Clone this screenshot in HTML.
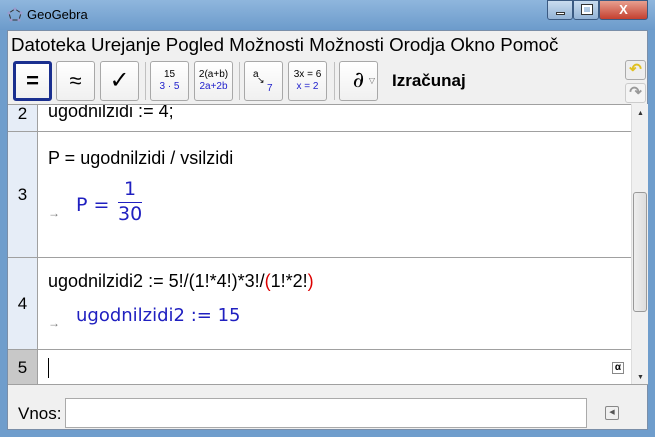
<!DOCTYPE html>
<html><head><meta charset="utf-8"><style>
*{margin:0;padding:0;box-sizing:border-box}
body{width:655px;height:437px;overflow:hidden;font-family:"Liberation Sans",sans-serif;background:#6f9dcc;position:relative}
.title{position:absolute;left:0;top:0;width:655px;height:30px;background:linear-gradient(#8fb6dd,#6c9bcb)}
.title span{position:absolute;left:27px;top:7px;font-size:13px;color:#000}
.wb{position:absolute;top:0;height:20px;border:1px solid #3b5a82;border-radius:0 0 3px 3px}
.inner{position:absolute;left:7px;top:30px;width:641px;height:400px;background:#f0f0f0;border:1px solid #7a8ea8}
.menu{position:absolute;left:3px;top:3px;font-size:18.7px;white-space:nowrap}
.btn{position:absolute;top:30px;width:39px;height:40px;background:linear-gradient(#fff,#f0f0f0);border:1px solid #a8a8a8;border-radius:3px;text-align:center}
.sep{position:absolute;top:31px;width:1px;height:38px;background:#c0c0c0}
.content{position:absolute;left:0;top:73px;width:623px;height:280px;background:#fff;border-top:1px solid #a0a0a0;overflow:hidden}
.num{position:absolute;left:0;width:30px;background:#e6edf7;border-right:1px solid #a0a0a0;border-bottom:1px solid #a0a0a0;font-size:17px;text-align:center}
.row{position:absolute;left:30px;width:593px;border-bottom:1px solid #a0a0a0}
.t{position:absolute;font-size:18px;color:#000;white-space:nowrap}
.b{color:#2020c0;font-family:"DejaVu Sans",sans-serif}
.arr{position:absolute;color:#777;font-size:12px}
</style></head><body>
<div class="title"><span>GeoGebra</span>
<svg style="position:absolute;left:7px;top:7px" width="16" height="16"><polygon points="8,2 14,6 12,13 4,13 2,6" fill="none" stroke="#333" stroke-width="1"/><circle cx="8" cy="2" r="1.5" fill="#99c"/><circle cx="14" cy="6" r="1.5" fill="#99c"/><circle cx="12" cy="13" r="1.5" fill="#99c"/><circle cx="4" cy="13" r="1.5" fill="#99c"/><circle cx="2" cy="6" r="1.5" fill="#99c"/></svg>
<div class="wb" style="left:547px;width:26px;background:linear-gradient(#c9dcef,#93b3d6)"><div style="position:absolute;left:8px;top:11px;width:9px;height:3px;background:#fff;border:1px solid #333"></div></div>
<div class="wb" style="left:573px;width:26px;background:linear-gradient(#c9dcef,#93b3d6)"><div style="position:absolute;left:8px;top:4px;width:10px;height:9px;border:2px solid #fff;outline:1px solid #333"></div></div>
<div class="wb" style="left:599px;width:49px;background:linear-gradient(#e8a090,#c44030);color:#fff;font-weight:bold;font-size:13px;text-align:center;line-height:18px">X</div>
</div>
<div class="inner">
<div class="menu">Datoteka Urejanje Pogled Možnosti Možnosti Orodja Okno Pomoč</div>
<div class="btn" style="left:5px;border:3px solid #1a2f8f;font-size:22px;line-height:34px;font-weight:bold">=</div>
<div class="btn" style="left:48px;font-size:22px;line-height:38px">≈</div>
<div class="btn" style="left:92px;font-size:24px;line-height:38px">✓</div>
<div class="sep" style="left:137px"></div>
<div class="btn" style="left:142px;font-size:10px;line-height:12px;padding-top:7px">15<br><span style="color:#22c">3 · 5</span></div>
<div class="btn" style="left:186px;font-size:10px;line-height:12px;padding-top:7px">2(a+b)<br><span style="color:#22c">2a+2b</span></div>
<div class="sep" style="left:231px"></div>
<div class="btn" style="left:236px;font-size:10px"><span style="position:absolute;left:8px;top:7px">a</span><span style="position:absolute;left:12px;top:13px;font-size:9px">↘</span><span style="position:absolute;left:22px;top:21px;color:#22c">7</span></div>
<div class="btn" style="left:280px;font-size:10px;line-height:12px;padding-top:7px">3x = 6<br><span style="color:#22c">x = 2</span></div>
<div class="sep" style="left:326px"></div>
<div class="btn" style="left:331px;font-size:22px;line-height:38px;font-family:'DejaVu Serif',serif;font-style:italic">∂<span style="position:absolute;right:2px;bottom:0;font-size:8px;color:#666;font-style:normal">▽</span></div>
<div style="position:absolute;left:384px;top:40px;font-size:17px;font-weight:bold">Izračunaj</div>
<div style="position:absolute;left:617px;top:29px;width:21px;height:20px;border:1px solid #aaa;border-radius:3px;background:#eee;color:#e0c020;font-size:15px;text-align:center;line-height:18px;font-weight:bold">↶</div>
<div style="position:absolute;left:617px;top:52px;width:21px;height:20px;border:1px solid #ccc;border-radius:3px;background:#f4f4f4;color:#999;font-size:15px;text-align:center;line-height:18px;font-weight:bold">↷</div>
<div class="content">
<div class="num" style="top:-1px;height:28px;line-height:20px">2</div>
<div class="row" style="top:-1px;height:28px"><div class="t" style="left:10px;top:-3px">ugodnilzidi := 4;</div></div>
<div class="num" style="top:27px;height:126px;line-height:126px">3</div>
<div class="row" style="top:27px;height:126px"><div class="t" style="left:10px;top:16px">P = ugodnilzidi / vsilzidi</div>
<span class="arr" style="left:10px;top:74px">→</span>
<div class="t b" style="left:38px;top:62px;font-size:19px">P =</div>
<div class="t b" style="left:80px;top:46px;font-size:19px;text-align:center;width:24px">1<div style="border-top:1px solid #2020c0;margin-top:2px"></div>30</div></div>
<div class="num" style="top:153px;height:92px;line-height:92px">4</div>
<div class="row" style="top:153px;height:92px"><div class="t" style="left:10px;top:13px">ugodnilzidi2 := 5!/(1!*4!)*3!/<span style="color:#d00">(</span>1!*2!<span style="color:#d00">)</span></div>
<span class="arr" style="left:10px;top:58px">→</span>
<div class="t b" style="left:38px;top:47px;font-size:18px">ugodnilzidi2 := 15</div></div>
<div class="num" style="top:245px;height:35px;line-height:35px;background:#c8c8c8">5</div>
<div class="row" style="top:245px;height:35px;border:none"><div style="position:absolute;left:10px;top:8px;width:1px;height:20px;background:#000"></div>
<div style="position:absolute;left:574px;top:12px;width:12px;height:12px;border:1px solid #888;font-size:10px;font-weight:bold;text-align:center;line-height:10px">α</div></div>
</div>
<div style="position:absolute;left:623px;top:73px;width:17px;height:280px;background:#f0f0f0;border-left:1px solid #ddd">
<div style="position:absolute;left:5px;top:6px;font-size:7px;color:#333">▲</div>
<div style="position:absolute;left:1px;top:88px;width:14px;height:120px;border:1px solid #999;border-radius:3px;background:linear-gradient(90deg,#eee,#ddd)"></div>
<div style="position:absolute;left:5px;top:270px;font-size:7px;color:#333">▼</div></div>
<div style="position:absolute;left:0;top:353px;width:640px;height:1px;background:#a0a0a0"></div>
<div style="position:absolute;left:10px;top:373px;font-size:17px">Vnos:</div>
<div style="position:absolute;left:57px;top:367px;width:522px;height:30px;background:#fff;border:1px solid #aaa"></div>
<div style="position:absolute;left:597px;top:375px;width:14px;height:14px;border:1px solid #888;border-radius:2px;font-size:7px;text-align:center;line-height:12px;color:#555">◀</div>
</div>
</body></html>
